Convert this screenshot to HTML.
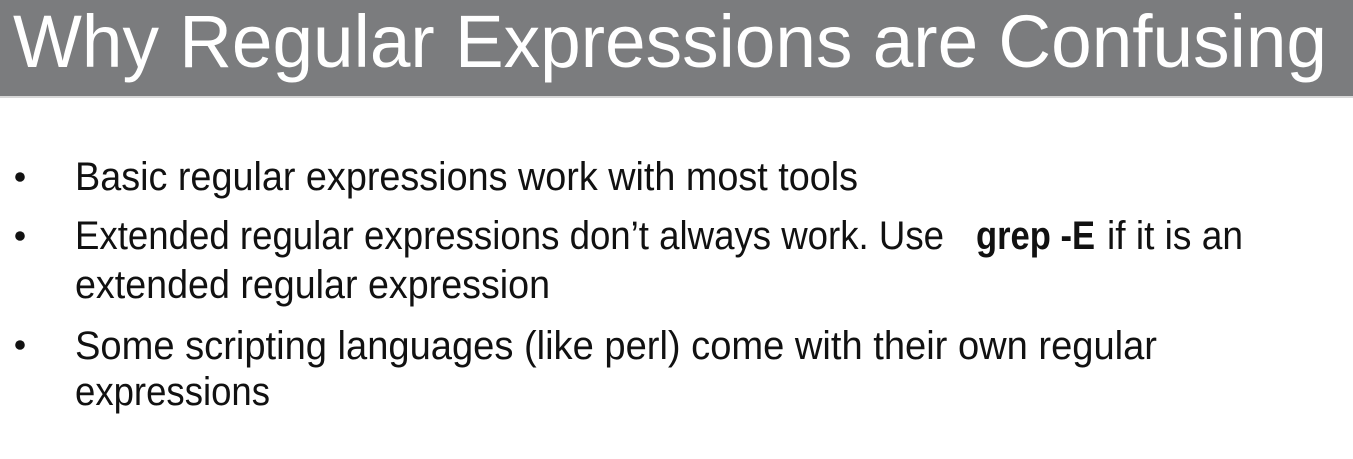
<!DOCTYPE html>
<html><head><meta charset="utf-8"><style>
html,body{margin:0;padding:0;background:#fff;}
svg{display:block;}
text{font-family:"Liberation Sans",sans-serif;}
</style></head><body>
<svg width="1353" height="459" viewBox="0 0 1353 459" xmlns="http://www.w3.org/2000/svg">
<rect x="0" y="0" width="1353" height="96" fill="#7b7c7e"/>
<rect x="0" y="96" width="1353" height="2" fill="#d8d8d8"/>
<text x="13" y="67" font-size="74" fill="#fff" textLength="1314" lengthAdjust="spacingAndGlyphs">Why Regular Expressions are Confusing</text>
<g fill="#111" font-size="40">
<circle cx="20" cy="177" r="4.8"/>
<circle cx="20" cy="236" r="4.8"/>
<circle cx="20" cy="345" r="4.8"/>
<text x="75" y="190" textLength="783" lengthAdjust="spacingAndGlyphs">Basic regular expressions work with most tools</text>
<text x="75" y="249" textLength="869" lengthAdjust="spacingAndGlyphs">Extended regular expressions don’t always work. Use</text>
<text x="976" y="249" font-weight="bold" textLength="119" lengthAdjust="spacingAndGlyphs">grep -E</text>
<text x="1107" y="249" textLength="136" lengthAdjust="spacingAndGlyphs">if it is an</text>
<text x="75" y="298" textLength="475" lengthAdjust="spacingAndGlyphs">extended regular expression</text>
<text x="75" y="359" textLength="1082" lengthAdjust="spacingAndGlyphs">Some scripting languages (like perl) come with their own regular</text>
<text x="75" y="405" textLength="195" lengthAdjust="spacingAndGlyphs">expressions</text>
</g>
</svg>
</body></html>
